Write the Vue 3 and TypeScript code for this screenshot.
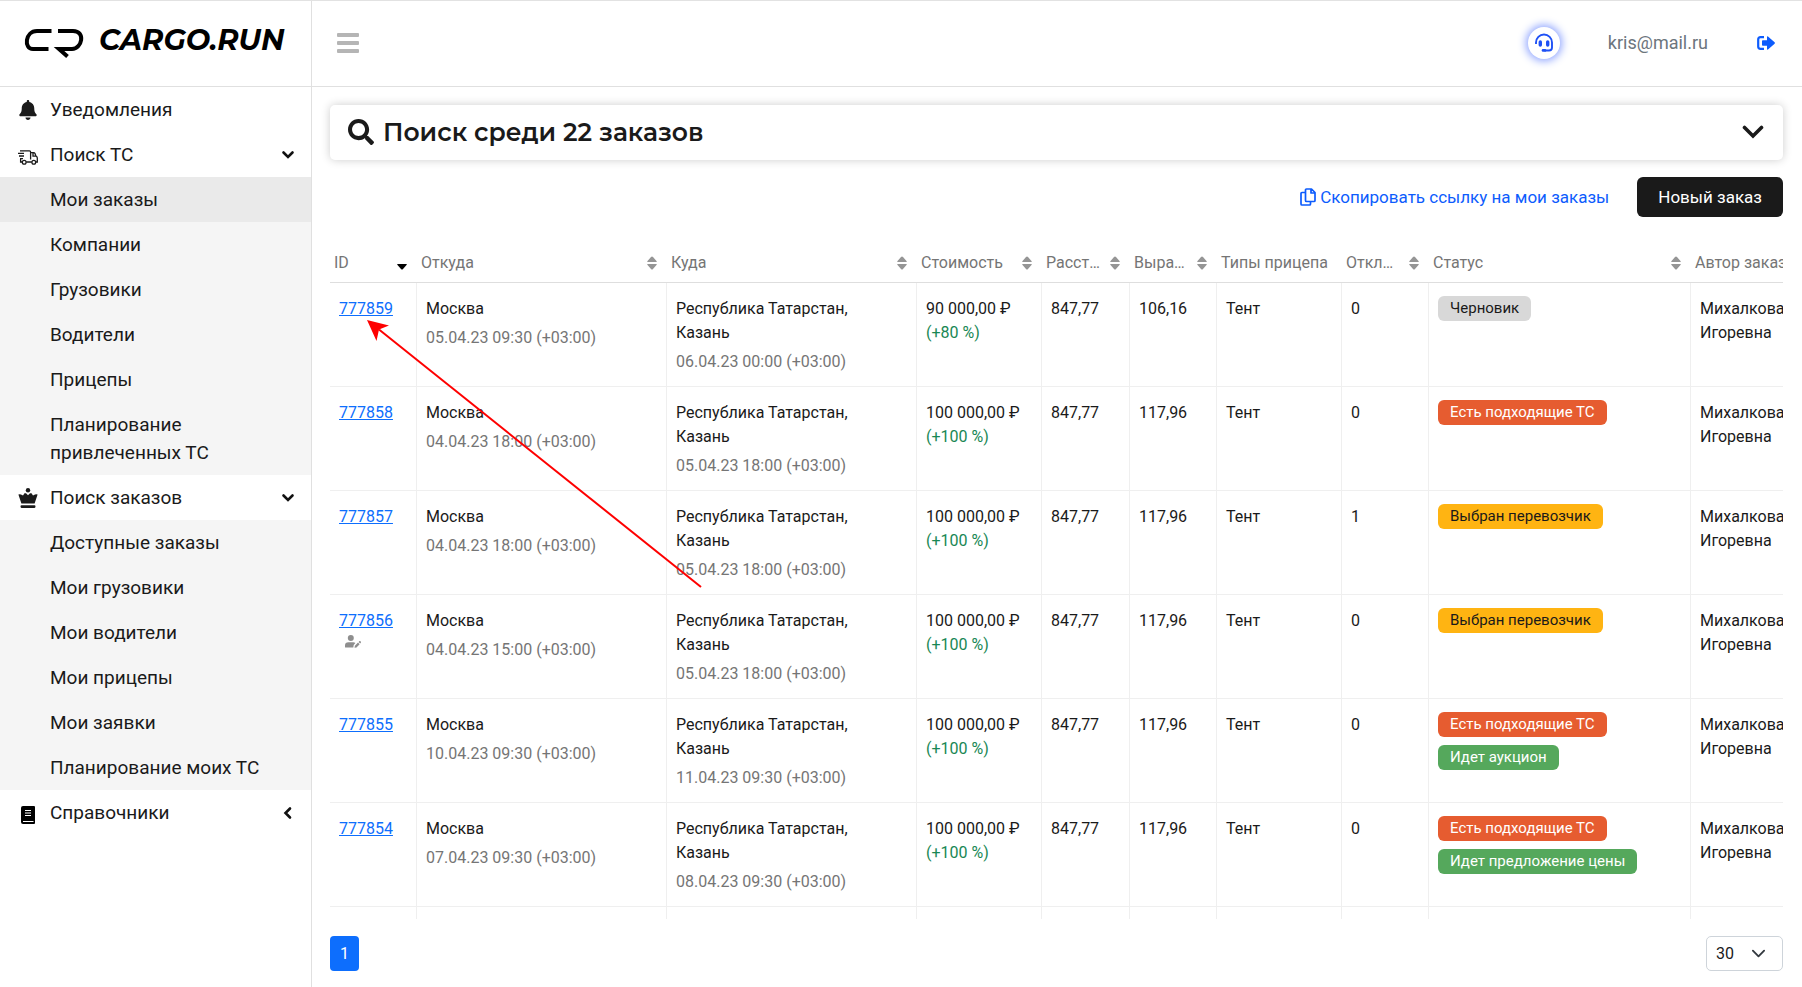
<script setup lang="ts">
import { ref } from 'vue'

interface MenuItem { label: string; active?: boolean }
interface Column { title: string; kind: string; sort?: 'both' | 'desc' }
interface Badge { text: string; tone: 'grey' | 'orange' | 'yellow' | 'green' }
interface Order {
  id: string
  from: string
  price: string
  percent: string
  to: string
  rate: string
  declined: number
  manual?: boolean
  badges: Badge[]
}

const searchMenu: MenuItem[] = [
  { label: 'Мои заказы', active: true },
  { label: 'Компании' },
  { label: 'Грузовики' },
  { label: 'Водители' },
  { label: 'Прицепы' },
  { label: 'Планирование привлеченных ТС' },
]
const ordersMenu: MenuItem[] = [
  { label: 'Доступные заказы' },
  { label: 'Мои грузовики' },
  { label: 'Мои водители' },
  { label: 'Мои прицепы' },
  { label: 'Мои заявки' },
  { label: 'Планирование моих ТС' },
]

const columns: Column[] = [
  { title: 'ID', kind: 'id', sort: 'desc' },
  { title: 'Откуда', kind: 'place', sort: 'both' },
  { title: 'Куда', kind: 'place', sort: 'both' },
  { title: 'Стоимость', kind: 'medium', sort: 'both' },
  { title: 'Расст…', kind: 'small', sort: 'both' },
  { title: 'Выра…', kind: 'narrow', sort: 'both' },
  { title: 'Типы прицепа', kind: 'medium' },
  { title: 'Откл…', kind: 'narrow', sort: 'both' },
  { title: 'Статус', kind: 'status', sort: 'both' },
  { title: 'Автор заказа', kind: 'author' },
]

const draft: Badge = { text: 'Черновик', tone: 'grey' }
const matches: Badge = { text: 'Есть подходящие ТС', tone: 'orange' }
const chosen: Badge = { text: 'Выбран перевозчик', tone: 'yellow' }
const auction: Badge = { text: 'Идет аукцион', tone: 'green' }
const offers: Badge = { text: 'Идет предложение цены', tone: 'green' }

const orders: Order[] = [
  { id: '777859', from: '05.04.23 09:30', to: '06.04.23 00:00', price: '90 000,00', percent: '80', rate: '106,16', declined: 0, badges: [draft] },
  { id: '777858', from: '04.04.23 18:00', to: '05.04.23 18:00', price: '100 000,00', percent: '100', rate: '117,96', declined: 0, badges: [matches] },
  { id: '777857', from: '04.04.23 18:00', to: '05.04.23 18:00', price: '100 000,00', percent: '100', rate: '117,96', declined: 1, badges: [chosen] },
  { id: '777856', from: '04.04.23 15:00', to: '05.04.23 18:00', price: '100 000,00', percent: '100', rate: '117,96', declined: 0, manual: true, badges: [chosen] },
  { id: '777855', from: '10.04.23 09:30', to: '11.04.23 09:30', price: '100 000,00', percent: '100', rate: '117,96', declined: 0, badges: [matches, auction] },
  { id: '777854', from: '07.04.23 09:30', to: '08.04.23 09:30', price: '100 000,00', percent: '100', rate: '117,96', declined: 0, badges: [matches, offers] },
]

const pageSize = ref('30')
</script>

<template>
  <div class="app">
    <aside class="sidebar">
      <a class="brand" href="#" aria-label="CARGO.RUN">
        <svg class="brand-mark" width="60" height="30" viewBox="0 0 60 30" fill="none" stroke="#000" stroke-width="4">
          <path d="M27.500 3H13C1 3 -.5 21 9 21H24.500" />
          <path d="M34 3H49C62 3 58 21 48 21H35L43.500 28.500" />
        </svg>
        <span class="brand-name">CARGO.RUN</span>
      </a>
      <nav class="menu">
        <a class="item" href="#">
          <svg class="item-icon" width="18" height="20" viewBox="0 0 448 512" fill="#1a1a1a"><path d="M224 512c35.32 0 63.97-28.65 63.97-64H160.03c0 35.35 28.65 64 63.97 64zm215.39-149.71c-19.32-20.76-55.47-51.99-55.47-154.29 0-77.7-54.48-139.9-127.94-155.16V32c0-17.67-14.32-32-31.98-32s-31.98 14.33-31.98 32v20.84C118.56 68.1 64.08 130.3 64.08 208c0 102.3-36.15 133.53-55.47 154.29-6 6.45-8.66 14.16-8.61 21.71.11 16.4 12.98 32 32.1 32h383.8c19.12 0 32-15.6 32.1-32 .05-7.55-2.61-15.27-8.61-21.71z" /></svg>
          <span>Уведомления</span>
        </a>
        <button class="item" type="button">
          <svg class="item-icon truck" width="20" height="15" viewBox="0 0 20 15" fill="none" stroke="#1a1a1a" stroke-width="1.3">
            <path d="M2 .8H11.5Q12.600 .8 12.600 2V9.500M0 3.400H6M1 6H6M2 8.600H5M2.600 9V12H4.200M8.200 12H13.800M12.600 2.600H15.500Q16.600 2.600 17 3.600L18 6.200Q19.300 6.800 19.300 8V12H17.800M15 3V6.200H18" />
            <circle cx="6.200" cy="12.200" r="1.900" /><circle cx="15.800" cy="12.200" r="1.900" />
          </svg>
          <span>Поиск ТС</span>
          <svg class="arrow" width="14" height="14" viewBox="0 0 14 14" fill="none" stroke="#111" stroke-width="2.600" stroke-linecap="round"><path d="M2.500 4.500L7 9l4.500-4.500" /></svg>
        </button>
        <div class="submenu">
          <a v-for="entry in searchMenu" :key="entry.label" class="item sub" :class="{ active: entry.active }" href="#">{{ entry.label }}</a>
        </div>
        <button class="item" type="button">
          <svg class="item-icon" width="20" height="20" viewBox="0 0 20 20" fill="#1a1a1a">
            <circle cx="10" cy="2.300" r="2.200" />
            <path d="M.4 6.600Q1.500 5.800 3 6.500L5 7.500 6.500 5.200H8L10 7.300 12 5.200H13.500L15 7.500 17 6.500Q18.500 5.800 19.600 6.600L16.600 15.500H3.400zM3.500 17.300H16.500Q17.500 17.300 17.500 18.600T16.500 19.900H3.500Q2.500 19.900 2.500 18.600T3.500 17.300z" />
          </svg>
          <span>Поиск заказов</span>
          <svg class="arrow" width="14" height="14" viewBox="0 0 14 14" fill="none" stroke="#111" stroke-width="2.600" stroke-linecap="round"><path d="M2.500 4.500L7 9l4.500-4.500" /></svg>
        </button>
        <div class="submenu">
          <a v-for="entry in ordersMenu" :key="entry.label" class="item sub" href="#">{{ entry.label }}</a>
        </div>
        <button class="item" type="button">
          <svg class="item-icon book" width="14" height="18" viewBox="0 0 14 18">
            <path d="M2 0H13Q14 0 14 1V17Q14 18 13 18H2Q0 18 0 16V2Q0 0 2 0z" fill="#000" />
            <path d="M4 4.500h6M4 7h6M4 9.500h6M2 15.500H12.500" stroke="#fff" stroke-width="1.100" />
          </svg>
          <span>Справочники</span>
          <svg class="arrow" width="14" height="14" viewBox="0 0 14 14" fill="none" stroke="#111" stroke-width="2.600" stroke-linecap="round"><path d="M9 2.500L4.500 7 9 11.500" /></svg>
        </button>
      </nav>
    </aside>

    <div class="page">
      <header class="topbar">
        <button class="plain" type="button" aria-label="Меню">
          <svg width="22" height="20" viewBox="0 0 22 20" fill="#b5b5b5"><rect width="22" height="4" rx="1" /><rect y="8" width="22" height="4" rx="1" /><rect y="16" width="22" height="4" rx="1" /></svg>
        </button>
        <div class="account">
          <button class="support" type="button" aria-label="Поддержка">
            <svg width="18" height="19" viewBox="0 0 18 19" fill="none" stroke="#1f51f5" stroke-width="1.900">
              <path d="M1 11V9.500a8 8 0 0 1 16 0V14.500Q17 17.500 14 17.500H9.500" />
              <path d="M5.300 9v3M12.700 9v3" stroke-width="3.400" stroke-linecap="round" />
              <path d="M8 17.400h2" stroke-width="2.600" stroke-linecap="round" />
            </svg>
          </button>
          <span class="email">kris@mail.ru</span>
          <button class="plain" type="button" aria-label="Выйти">
            <svg width="18" height="14" viewBox="0 0 18 14">
              <path d="M7 1.200H3.500Q1.200 1.200 1.200 3.500V10.500Q1.200 12.800 3.500 12.800H7" fill="none" stroke="#0d5cfd" stroke-width="2.200" />
              <path d="M5 5Q5 4.200 5.800 4.200H10V1Q10 0 11 .5L17.600 6.300Q18.200 7 17.600 7.700L11 13.500Q10 14 10 13V9.800H5.800Q5 9.800 5 9z" fill="#0d5cfd" />
            </svg>
          </button>
        </div>
      </header>

      <main class="content">
        <button class="search" type="button">
          <svg width="26" height="26" viewBox="0 0 512 512" fill="#1a1a1a"><path d="M505 442.7L405.3 343c-4.5-4.5-10.600-7-17-7H372c27.600-35.300 44-79.700 44-128C416 93.100 322.900 0 208 0S0 93.100 0 208s93.100 208 208 208c48.300 0 92.700-16.400 128-44v16.300c0 6.400 2.500 12.500 7 17l99.700 99.700c9.400 9.400 24.600 9.400 33.900 0l28.300-28.300c9.400-9.400 9.400-24.600.1-34zM208 336c-70.700 0-128-57.200-128-128 0-70.700 57.200-128 128-128 70.700 0 128 57.200 128 128 0 70.700-57.200 128-128 128z" /></svg>
          <span class="search-title">Поиск среди 22 заказов</span>
          <svg class="arrow" width="22" height="14" viewBox="0 0 22 14" fill="none" stroke="#1a1a1a" stroke-width="3.600" stroke-linecap="round"><path d="M2.500 2.500L11 11l8.500-8.500" /></svg>
        </button>

        <div class="actions">
          <a class="copy" href="#">
            <svg width="16" height="18" viewBox="0 0 16 18" fill="none" stroke="#0d5cfd" stroke-width="1.700" stroke-linejoin="round">
              <path d="M6.500 1H11.500L15 4.500V12.500Q15 13.500 14 13.500H6.500Q5.500 13.500 5.500 12.500V2Q5.500 1 6.500 1zM11 1V5H15" />
              <path d="M5 4.500H2Q1 4.500 1 5.500V16Q1 17 2 17H9.500Q10.500 17 10.500 16V14" />
            </svg>
            <span>Скопировать ссылку на мои заказы</span>
          </a>
          <button class="create" type="button">Новый заказ</button>
        </div>

        <div class="table-wrap">
          <table>
            <colgroup>
              <col v-for="column in columns" :key="column.title" :class="'col-' + column.kind">
            </colgroup>
            <thead>
              <tr>
                <th v-for="column in columns" :key="column.title" scope="col">
                  <div class="head">
                    <span>{{ column.title }}</span>
                    <svg v-if="column.sort" width="10" height="14" viewBox="0 0 10 14">
                      <path v-if="column.sort === 'both'" d="M.6 6Q0 6 .3 5.200L4 1Q5 0 6 1L9.700 5.200Q10 6 9.400 6zM.6 8Q0 8 .3 8.800L4 13Q5 14 6 13L9.700 8.800Q10 8 9.400 8z" fill="#959595" />
                      <path v-else d="M.6 8Q0 8 .3 8.800L4 13Q5 14 6 13L9.700 8.800Q10 8 9.400 8z" fill="#000" />
                    </svg>
                  </div>
                </th>
              </tr>
            </thead>
            <tbody>
              <tr v-for="order in orders" :key="order.id">
                <td>
                  <a class="order-link" href="#">{{ order.id }}</a>
                  <svg v-if="order.manual" class="manual" width="16" height="13" viewBox="0 0 16 13" fill="#8e8e8e">
                    <circle cx="5.800" cy="3" r="3" />
                    <path d="M0 12V10.500Q0 7.200 3.500 7.200H8.200Q9.500 7.200 10.400 8L8.700 10 8.300 12.500H.8Q0 12.500 0 12zM9.500 12.800L9.900 10.800 13 7.600 14.600 9.200 11.500 12.400zM13.600 7L14.500 6.100Q15 5.700 15.500 6.200L15.900 6.700Q16.200 7.200 15.800 7.700L15.100 8.500z" />
                  </svg>
                </td>
                <td>
                  <div>Москва</div>
                  <div class="date">{{ order.from }} (+03:00)</div>
                </td>
                <td class="destination">
                  <div>Республика Татарстан, Казань</div>
                  <div class="date">{{ order.to }} (+03:00)</div>
                </td>
                <td>
                  <div>{{ order.price }} ₽</div>
                  <div class="gain">(+{{ order.percent }} %)</div>
                </td>
                <td>847,77</td>
                <td>{{ order.rate }}</td>
                <td>Тент</td>
                <td>{{ order.declined }}</td>
                <td class="status">
                  <div class="badges">
                    <span v-for="badge in order.badges" :key="badge.text" class="badge" :class="badge.tone">{{ badge.text }}</span>
                  </div>
                </td>
                <td>
                  <div>Михалкова</div>
                  <div>Игоревна</div>
                </td>
              </tr>
              <tr>
                <td v-for="column in columns" :key="column.title"></td>
              </tr>
            </tbody>
          </table>
        </div>

        <footer class="pager">
          <button class="page-number" type="button">1</button>
          <select v-model="pageSize" class="page-size" aria-label="Строк на странице">
            <option>30</option>
            <option>50</option>
            <option>100</option>
          </select>
        </footer>
      </main>
    </div>

    <svg class="pointer" width="336" height="268" viewBox="0 0 336 268" aria-hidden="true">
      <path d="M12 9.500L334 267" stroke="#fe0000" stroke-width="2" />
      <path d="M0 0L22 5.500 12 9.500 9.500 21z" fill="#fe0000" />
    </svg>
  </div>
</template>

<style>
body {
  background: #fff;
}
</style>

<style scoped>
.app {
  position: relative;
  box-sizing: border-box;
  display: flex;
  height: 100vh;
  border-top: 1px solid #e2e2e2;
  font-family: Roboto, "Liberation Sans", sans-serif;
  font-size: 16px;
  line-height: 24px;
  color: #1a1a1a;
  overflow: hidden;
}
.app * {
  box-sizing: border-box;
}
button {
  font: inherit;
  color: inherit;
  border: 0;
  background: none;
  padding: 0;
  cursor: pointer;
}
a {
  text-decoration: none;
  color: inherit;
}
svg {
  display: block;
  flex: none;
}
.arrow {
  margin-left: auto;
}

.sidebar {
  flex: none;
  width: 312px;
  border-right: 1px solid #e0e0e0;
}
.brand {
  display: flex;
  align-items: flex-start;
  height: 86px;
  padding: 27px 0 0 24px;
  border-bottom: 1px solid #e0e0e0;
  color: #000;
}
.brand-name {
  margin-left: 15px;
  font: italic 700 29px/24px Montserrat, Inter, sans-serif;
}
.item {
  display: flex;
  align-items: center;
  width: 100%;
  padding: 9px 16px 8px 50px;
  font-size: 19px;
  line-height: 28px;
  text-align: left;
}
.item-icon {
  width: 20px;
  margin: 0 12px 0 -32px;
}
.truck,
.book {
  margin-top: 4px;
}
.submenu {
  background: #f5f5f5;
}
.sub {
  padding-right: 40px;
}
.active {
  background: #eaeaea;
}

.page {
  flex: 1;
  min-width: 0;
  display: flex;
  flex-direction: column;
}
.topbar {
  flex: none;
  display: flex;
  align-items: center;
  justify-content: space-between;
  height: 86px;
  padding: 0 27px 2px 25px;
  border-bottom: 1px solid #e0e0e0;
}
.account {
  display: flex;
  align-items: center;
}
.support {
  display: flex;
  align-items: center;
  justify-content: center;
  width: 32px;
  height: 32px;
  margin-right: 48px;
  border-radius: 50%;
  background: #fff;
  box-shadow: 0 0 8px 2px #8ea4ff;
}
.email {
  margin-right: 49px;
  font-size: 18px;
  color: #6c757d;
}

.content {
  flex: 1;
  min-height: 0;
  display: flex;
  flex-direction: column;
  padding: 18px 19px 16px 18px;
}
.search {
  flex: none;
  display: flex;
  align-items: center;
  height: 55px;
  padding: 0 19px 2px 18px;
  border-radius: 5px;
  background: #fff;
  box-shadow: 0 0 10px rgba(0, 0, 0, 0.2);
}
.search-title {
  margin-left: 9px;
  font: 600 25px/32px Montserrat, Inter, sans-serif;
}
.actions {
  display: flex;
  align-items: center;
  justify-content: flex-end;
  gap: 28px;
  margin-top: 17px;
}
.copy {
  display: flex;
  align-items: center;
  gap: 4px;
  font-size: 17px;
  color: #0d5cfd;
}
.create {
  height: 40px;
  padding: 0 21px;
  border-radius: 6px;
  background: #1a1a1a;
  font-size: 17px;
  color: #fff;
}

.table-wrap {
  flex: 1;
  min-height: 0;
  margin-top: 25px;
  overflow: hidden;
}
table {
  width: 1511px;
  min-width: 100%;
  table-layout: fixed;
  border-collapse: separate;
  border-spacing: 0;
}
.col-id {
  width: 87px;
}
.col-place {
  width: 250px;
}
.col-medium {
  width: 125px;
}
.col-small {
  width: 88px;
}
.col-narrow {
  width: 87px;
}
.col-status {
  width: 262px;
}
.col-author {
  width: 150px;
}
th {
  height: 41px;
  padding: 2px 10px 0 4px;
  border-bottom: 1px solid #dedede;
  font-weight: 400;
  text-align: left;
  color: #757575;
  white-space: nowrap;
}
.head {
  display: flex;
  align-items: center;
  justify-content: space-between;
}
td {
  height: 104px;
  padding: 14px 9px 0;
  border-right: 1px solid #efefef;
  border-bottom: 1px solid #efefef;
  vertical-align: top;
}
.destination {
  padding-right: 40px;
}
.status {
  padding-top: 13px;
}
.order-link {
  color: #0d6efd;
  text-decoration: underline;
}
.manual {
  margin: 2px 0 0 6px;
}
.date {
  margin-top: 5px;
  color: #757575;
}
.gain {
  color: #198754;
}
.badges {
  display: flex;
  flex-direction: column;
  align-items: flex-start;
  gap: 8px;
}
.badge {
  padding: 0 12px 1px;
  border-radius: 6px;
  font-size: 15px;
  line-height: 24px;
  color: #fff;
}
.grey {
  background: #d8d8d8;
  color: #1a1a1a;
}
.orange {
  background: #e65c30;
}
.yellow {
  background: #ffb412;
  color: #1a1a1a;
}
.green {
  background: #55a85c;
}

.pager {
  flex: none;
  display: flex;
  align-items: center;
  justify-content: space-between;
  margin-top: 17px;
}
.page-number {
  width: 29px;
  height: 35px;
  border-radius: 4px;
  background: #0d6efd;
  color: #fff;
}
.page-size {
  appearance: none;
  width: 77px;
  height: 35px;
  padding: 0 9px;
  border: 1px solid #ced4da;
  border-radius: 5px;
  background: #fff url("data:image/svg+xml,%3Csvg xmlns='http://www.w3.org/2000/svg' viewBox='0 0 16 16'%3E%3Cpath fill='none' stroke='%23343a40' stroke-width='2' stroke-linecap='round' stroke-linejoin='round' d='M2 5l6 6 6-6'/%3E%3C/svg%3E") no-repeat right 16px center / 15px 15px;
  font: inherit;
  color: #1a1a1a;
}

/* Annotation arrow laid over the table, pointing at the first order */
.pointer {
  position: absolute;
  left: 367px;
  top: 319px;
  pointer-events: none;
}
</style>
